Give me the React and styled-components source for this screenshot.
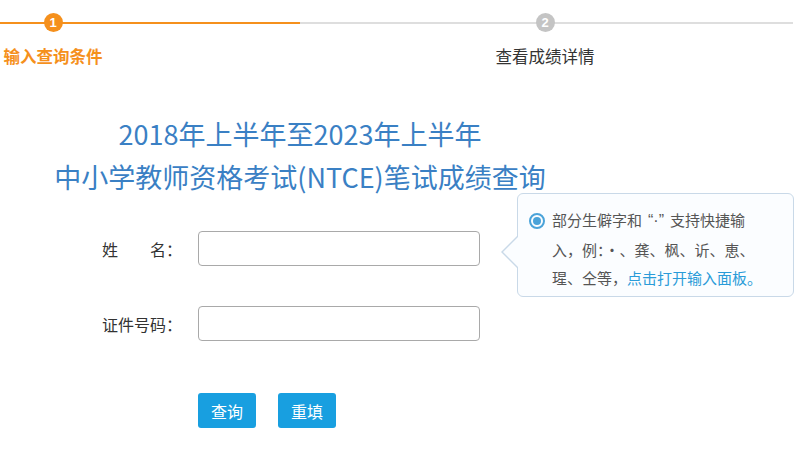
import React from "react";
import styled, { createGlobalStyle } from "styled-components";

const GlobalStyle = createGlobalStyle`
	html, body {
		margin: 0;
		padding: 0;
		background: #ffffff;
	}
	body {
		font-family: "Noto Sans CJK SC", "Noto Sans", sans-serif;
		color: #333333;
	}
`;

const colors = {
	orange: "#f5901c",
	grey: "#c4c4c4",
	line: "#dedede",
	title: "#3a80c4",
	blue: "#189fe0",
	link: "#2a9bd8",
};

const Page = styled.div`
	width: 800px;
	height: 466px;
	overflow: hidden;
`;

const Steps = styled.div`
	position: relative;
	display: flex;
	padding-top: 13px;
	height: 70px;
	box-sizing: border-box;
`;

const Track = styled.div`
	position: absolute;
	top: 22px;
	left: 0;
	right: 7px;
	display: flex;
	height: 2px;
`;

const TrackPart = styled.div`
	height: 2px;
	background: ${(p) => (p.done ? colors.orange : colors.line)};
	width: ${(p) => (p.done ? "300px" : "auto")};
	flex: ${(p) => (p.done ? "none" : 1)};
`;

const Step = styled.div`
	position: relative;
	width: 106px;
	margin-left: ${(p) => p.offset || 0}px;
	display: flex;
	flex-direction: column;
	align-items: center;
`;

const Dot = styled.div`
	width: 19px;
	height: 19px;
	border-radius: 50%;
	background: ${(p) => (p.active ? colors.orange : colors.grey)};
	color: #fff;
	font-size: 13px;
	font-weight: bold;
	line-height: 19px;
	text-align: center;
	font-family: "Liberation Sans", Arial, sans-serif;
`;

const StepLabel = styled.div`
	margin-top: 13px;
	font-size: 16.5px;
	line-height: 22px;
	white-space: nowrap;
	color: ${(p) => (p.active ? colors.orange : "#333")};
	font-weight: ${(p) => (p.active ? "bold" : "normal")};
`;

const Title = styled.h1`
	width: 600px;
	margin: 42px 0 0;
	text-align: center;
	font-size: 27px;
	font-weight: normal;
	line-height: 43px;
	color: ${colors.title};
`;

const Body = styled.div`
	display: flex;
	margin-top: -5px;
`;

const Form = styled.div`
	width: 500px;
	padding-top: 38px;
`;

const Row = styled.div`
	display: flex;
	align-items: center;
	height: 35px;
	margin-bottom: ${(p) => p.gap || 0}px;
`;

const Label = styled.label`
	flex: none;
	width: 198px;
	padding-right: 16px;
	box-sizing: border-box;
	text-align: right;
	font-size: 16px;
	color: #333;
	white-space: pre;
`;

const Input = styled.input`
	width: 282px;
	height: 35px;
	box-sizing: border-box;
	border: 1px solid #a9a9a9;
	border-radius: 4px;
	background: #fff;
	outline: none;
	padding: 0 8px;
	font-size: 15px;
`;

const Buttons = styled.div`
	display: flex;
	gap: 22px;
	padding-left: 198px;
	margin-top: 52px;
`;

const Button = styled.button`
	width: 58px;
	height: 35px;
	border: none;
	border-radius: 3px;
	background: ${colors.blue};
	color: #fff;
	font-size: 16px;
	font-family: inherit;
	padding: 0;
`;

const Tip = styled.div`
	position: relative;
	margin-left: 17px;
	width: 277px;
	height: 104px;
	box-sizing: border-box;
	border: 1px solid #c9d9e8;
	border-radius: 6px;
	background: #fbfdff;
	padding: 12px 10px 0 11px;
	display: flex;
	gap: 7px;
	align-items: flex-start;

	&::before,
	&::after {
		content: "";
		position: absolute;
		top: 41px;
		border-style: solid;
		border-color: transparent;
	}
	&::before {
		left: -17px;
		border-width: 17px 17px 17px 0;
		border-right-color: #c9d9e8;
	}
	&::after {
		left: -15px;
		border-width: 16px 16px 16px 0;
		top: 42px;
		border-right-color: #fbfdff;
	}
`;

const Radio = styled.span`
	flex: none;
	margin-top: 7px;
	width: 16px;
	height: 16px;
	box-sizing: border-box;
	border-radius: 50%;
	border: 2px solid #4aa3d9;
	display: flex;
	align-items: center;
	justify-content: center;

	&::after {
		content: "";
		width: 8px;
		height: 8px;
		border-radius: 50%;
		background: #4aa3d9;
	}
`;

const TipText = styled.p`
	margin: 0;
	font-size: 15px;
	line-height: 28.5px;
	color: #555;
	white-space: nowrap;
`;

const Quote = styled.span`
	font-family: "Liberation Sans", Arial, sans-serif;
	font-size: 16px;
	padding: 0 6px;
`;

const Link = styled.a`
	color: ${colors.link};
	text-decoration: none;
	cursor: pointer;
`;

export default function App() {
	return (
		<Page>
			<GlobalStyle />
			<Steps>
				<Track>
					<TrackPart done />
					<TrackPart />
				</Track>
				<Step>
					<Dot active>1</Dot>
					<StepLabel active>输入查询条件</StepLabel>
				</Step>
				<Step offset={386}>
					<Dot>2</Dot>
					<StepLabel>查看成绩详情</StepLabel>
				</Step>
			</Steps>

			<Title>
				2018年上半年至2023年上半年
				<br />
				中小学教师资格考试(NTCE)笔试成绩查询
			</Title>

			<Body>
				<Form>
					<Row gap={40}>
						<Label>{"姓\u2003\u2003名："}</Label>
						<Input type="text" />
					</Row>
					<Row>
						<Label>证件号码：</Label>
						<Input type="text" />
					</Row>
					<Buttons>
						<Button>查询</Button>
						<Button>重填</Button>
					</Buttons>
				</Form>
				<Tip>
					<Radio />
					<TipText>
						部分生僻字和<Quote>“·”</Quote>支持快捷输
						<br />
						入，例：·、龚、枫、䜣、恵、
						<br />
						瑆、仝等，<Link>点击打开输入面板。</Link>
					</TipText>
				</Tip>
			</Body>
		</Page>
	);
}
